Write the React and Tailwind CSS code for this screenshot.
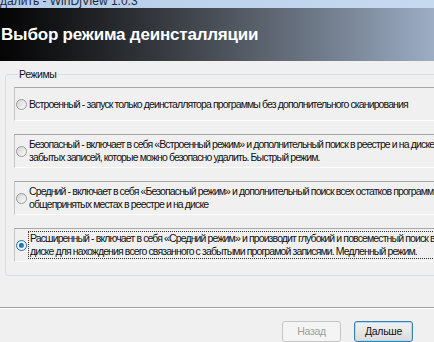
import React from "react";

function Radio({ checked }) {
  return (
    <span
      className={
        "mt-[1px] flex h-[11px] w-[11px] shrink-0 items-center justify-center rounded-full border " +
        (checked
          ? "border-[#2c6ea5] bg-gradient-to-br from-[#dbe9f5] to-[#ffffff]"
          : "border-[#9a9a9a] bg-gradient-to-br from-[#d4d4d4] to-[#fbfbfb]")
      }
    >
      {checked && (
        <span className="h-[5px] w-[5px] rounded-full bg-gradient-to-br from-[#0b4f8c] to-[#3fa0e0]" />
      )}
    </span>
  );
}

function Option({ lines, checked }) {
  return (
    <div className="flex h-[34px] w-[440px] items-center gap-[2px] border-t border-l border-t-[#a6a6a6] border-l-[#c6c6c6] border-b border-b-[#fcfcfc] pl-[1px]">
      <Radio checked={checked} />
      <div
        className={
          "leading-[13px] " +
          (checked ? "border border-dotted border-[#333] px-[1px] py-0 -ml-[1px]" : "")
        }
      >
        {lines.map((l, i) => (
          <div key={i} className="whitespace-nowrap">
            {l}
          </div>
        ))}
      </div>
    </div>
  );
}

export default function App() {
  return (
    <div
      className="flex h-[342px] w-[434px] flex-col overflow-hidden bg-[#f0f0f0] text-[10.5px] tracking-[-0.88px] text-[#111]"
      style={{ fontFamily: '"Liberation Sans", Arial, sans-serif' }}
    >
      <div className="h-[8px] shrink-0 overflow-hidden bg-gradient-to-r from-[#b5cde8] to-[#c6d9ef]">
        <div className="-mt-[6px] whitespace-nowrap text-[12px] leading-[14px] tracking-normal text-[#1e2a3a]">
          далить - WinDjView 1.0.3
        </div>
      </div>
      <div className="flex h-[53px] shrink-0 items-center bg-gradient-to-r from-[#050505] via-[#4a5058] to-[#9cadc4] pl-[1px]">
        <span className="text-[17px] font-bold tracking-[-0.2px] text-white">
          Выбор режима деинсталляции
        </span>
      </div>
      <div className="pl-[5px] pt-[7px]">
        <fieldset className="w-[470px] rounded-[3px] border border-[#d5dfe5] pb-[13px] pl-[8px] pt-[6px]">
          <legend className="ml-[4px] px-[1px] leading-[13px] tracking-[-0.4px]">Режимы</legend>
          <div className="flex flex-col gap-[13px]">
            <Option lines={["Встроенный - запуск только деинсталлятора программы без дополнительного сканирования"]} />
            <Option
              lines={[
                "Безопасный - включает в себя «Встроенный режим» и дополнительный поиск в реестре и на диске",
                "забытых записей, которые можно безопасно удалить. Быстрый режим.",
              ]}
            />
            <Option
              lines={[
                "Средний - включает в себя «Безопасный режим» и дополнительный поиск всех остатков программ",
                "общепринятых местах в реестре и на диске",
              ]}
            />
            <Option
              checked
              lines={[
                "Расширенный - включает в себя «Средний режим» и производит глубокий и повсеместный поиск в",
                "диске для нахождения всего связанного с забытыми програмой записями. Медленный режим.",
              ]}
            />
          </div>
        </fieldset>
      </div>
      <div className="mt-[31px] h-[2px] shrink-0 border-t border-t-[#a0a0a0] border-b border-b-[#ffffff]" />
      <div className="flex justify-end gap-[13px] pr-[21px] pt-[12px] tracking-[-0.3px]">
        <div className="flex h-[21px] w-[59px] items-center justify-center rounded-[3px] border border-[#c5c5c5] bg-[#f4f4f4] text-[#a0a0a0]">
          Назад
        </div>
        <div className="flex h-[21px] w-[59px] items-center justify-center rounded-[3px] border border-[#3c7fb1] bg-gradient-to-b from-[#f2f2f2] to-[#dcdcdc] text-[#111] shadow-[inset_0_0_0_1px_#a9dcf6]">
          Дальше
        </div>
      </div>
    </div>
  );
}
